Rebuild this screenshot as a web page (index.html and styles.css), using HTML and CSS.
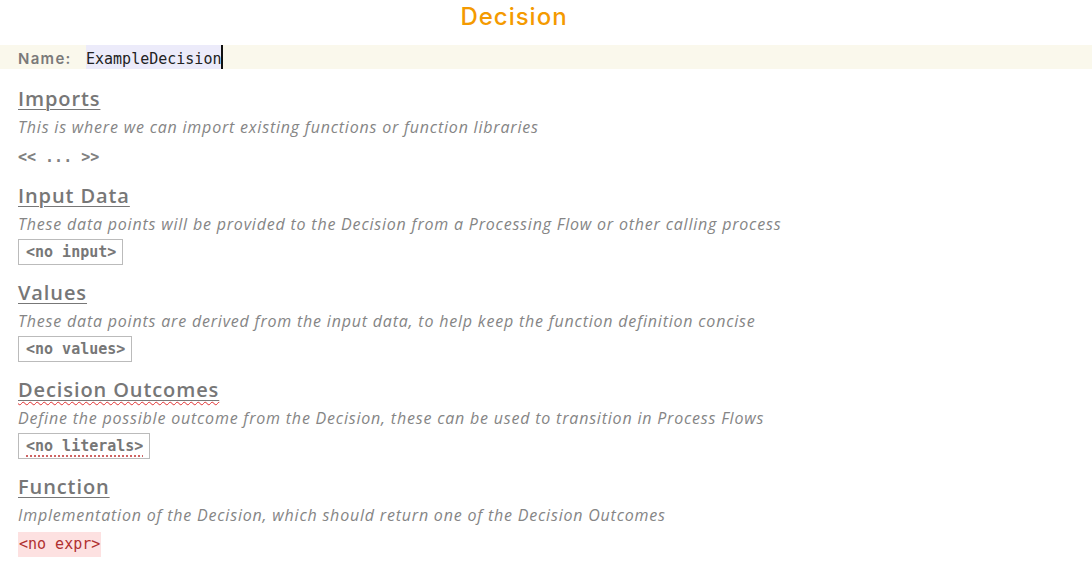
FILE: index.html
```html
<!DOCTYPE html>
<html>
<head>
<meta charset="utf-8">
<link rel="stylesheet" href="styles.css">
</head>
<body>
<h1 class="title">Decision</h1>
<div class="name-bar">
  <span class="name-label">Name:</span>
  <span class="name-input">ExampleDecision</span><span class="caret"></span>
</div>
<div class="sections">
  <section class="section">
    <h2 class="heading">Imports</h2>
    <p class="desc">This is where we can import existing functions or function libraries</p>
    <div class="plain">&lt;&lt; ... &gt;&gt;</div>
  </section>
  <section class="section">
    <h2 class="heading">Input Data</h2>
    <p class="desc">These data points will be provided to the Decision from a Processing Flow or other calling process</p>
    <div class="box">&lt;no input&gt;</div>
  </section>
  <section class="section">
    <h2 class="heading">Values</h2>
    <p class="desc">These data points are derived from the input data, to help keep the function definition concise</p>
    <div class="box">&lt;no values&gt;</div>
  </section>
  <section class="section">
    <h2 class="heading"><span class="spell">Decision Outcomes</span></h2>
    <p class="desc">Define the possible outcome from the Decision, these can be used to transition in Process Flows</p>
    <div class="box"><span class="spell-dot">&lt;no literals&gt;</span></div>
  </section>
  <section class="section">
    <h2 class="heading">Function</h2>
    <p class="desc">Implementation of the Decision, which should return one of the Decision Outcomes</p>
    <div class="expr">&lt;no expr&gt;</div>
  </section>
</div>
</body>
</html>
```
FILE: styles.css
```css
*, *::before, *::after {
  box-sizing: border-box;
}
html, body {
  margin: 0;
  padding: 0;
  background: #ffffff;
}
body {
  font-family: "Open Sans", "Liberation Sans", sans-serif;
  color: #777;
}
.title {
  margin: 0;
  padding: 2px 64px 0 0;
  height: 45px;
  text-align: center;
  font-family: Inter, "Open Sans", sans-serif;
  font-weight: 500;
  font-size: 24px;
  line-height: 30px;
  color: #f49a00;
  letter-spacing: 1px;
}
.name-bar {
  display: flex;
  align-items: stretch;
  height: 24px;
  background: #faf8ec;
  padding-left: 18px;
}
.name-label {
  font-family: Inter, "Open Sans", sans-serif;
  font-weight: 600;
  font-size: 15px;
  letter-spacing: 1.3px;
  line-height: 24px;
  padding-top: 2px;
  color: #7a7a7a;
  width: 68px;
}
.name-input {
  font-family: "DejaVu Sans Mono", "Liberation Mono", monospace;
  font-size: 15px;
  line-height: 24px;
  padding-top: 2px;
  color: #222;
  background: #ecebfa;
}
.caret {
  width: 2px;
  background: #111;
}
.sections {
  padding: 0 18px;
}
.section {
  height: 97px;
}
.section:first-child {
  padding-top: 16px;
  height: 113px;
}
.heading {
  margin: 0;
  font-family: "Open Sans", sans-serif;
  font-weight: 600;
  font-size: 20px;
  line-height: 28px;
  color: #777;
  text-decoration: underline;
  text-underline-offset: 3px;
  text-decoration-thickness: 1px;
  letter-spacing: 0.9px;
}
.desc {
  margin: 0;
  font-style: italic;
  font-size: 16px;
  line-height: 28px;
  color: #858585;
  letter-spacing: 0.8px;
}
.plain {
  font-family: "DejaVu Sans Mono", monospace;
  font-weight: bold;
  font-size: 15px;
  line-height: 32px;
  color: #808080;
}
.box {
  display: inline-block;
  margin-top: 1px;
  border: 1px solid #bbb;
  padding: 0 6px 0 7px;
  font-family: "DejaVu Sans Mono", monospace;
  font-weight: bold;
  font-size: 15px;
  line-height: 24px;
  color: #777;
}
.spell {
  text-decoration: underline wavy #e03030;
  text-decoration-thickness: 1px;
  text-underline-offset: 4px;
}
.spell-dot {
  text-decoration: underline dotted #c03030;
  text-underline-offset: 5px;
}
.expr {
  display: inline-block;
  margin-top: 3px;
  padding: 0 1px;
  background: #fde1e1;
  font-family: "DejaVu Sans Mono", monospace;
  font-size: 15px;
  line-height: 25px;
  color: #b03030;
}
```
